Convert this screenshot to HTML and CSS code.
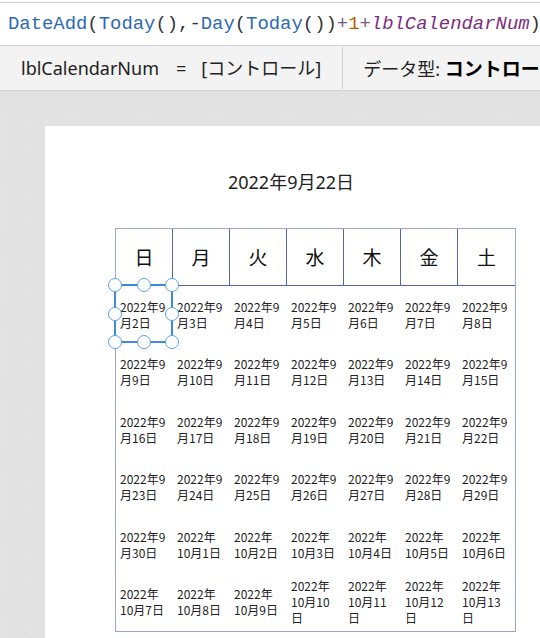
FILE: index.html
```html
<!DOCTYPE html>
<html lang="ja">
<head>
<meta charset="UTF-8">
<meta name="viewport" content="width=device-width, initial-scale=1.0">
<title>カレンダー</title>
<link rel="stylesheet" href="styles.css">
<script>
    var days;

    // 2022/9/2 から 42日分のラベルを並べる
    function getList(){
        var str = "";
        for(var i=0;i<42;i++){
            var d = new Date(2022, 8, 2 + i);
            str += "<div class='day'>" + d.getFullYear() + "年" + (d.getMonth()+1) + "月" + d.getDate() + "日</div>";
        }
        days.innerHTML = str;
    }

    window.addEventListener("load",function(){
        days = document.querySelector(".days");
        getList();
    });
</script>
</head>
<body>
    <div class="formula-bar">
        <span class="fn">DateAdd</span><span class="op">(</span><span class="fn">Today</span><span class="op">(),-</span><span class="fn">Day</span><span class="op">(</span><span class="fn">Today</span><span class="op">())</span><span class="plus">+</span><span class="num">1</span><span class="plus">+</span><span class="var">lblCalendarNum</span><span class="op">)</span>
    </div>
    <div class="info-bar">
        <div class="prop">lblCalendarNum<span class="eq">=</span>[コントロール]</div>
        <div class="type">データ型: <b>コントロー</b></div>
    </div>
    <div class="canvas">
        <div class="screen">
            <div class="title">2022年9月22日</div>
            <div class="gallery">
                <div class="week">
                    <div class="wd">日</div>
                    <div class="wd">月</div>
                    <div class="wd">火</div>
                    <div class="wd">水</div>
                    <div class="wd">木</div>
                    <div class="wd">金</div>
                    <div class="wd">土</div>
                </div>
                <div class="days"></div>
                <div class="selection">
                    <span class="handle tl"></span>
                    <span class="handle tc"></span>
                    <span class="handle tr"></span>
                    <span class="handle ml"></span>
                    <span class="handle mr"></span>
                    <span class="handle bl"></span>
                    <span class="handle bc"></span>
                    <span class="handle br"></span>
                </div>
            </div>
        </div>
    </div>
</body>
</html>
```
FILE: styles.css
```css
body{
    margin: 0;
    overflow: hidden;
    font-family: "Noto Sans", "Noto Sans CJK JP", sans-serif;
    color: #222;
    background: #fff;
}
.formula-bar{
    margin-top: 2px;
    height: 42px;
    border-top: 1px solid #d2d2d2;
    border-bottom: 1px solid #d2d2d2;
    padding-left: 8px;
    font-family: "Liberation Mono", monospace;
    font-size: 18.9px;
    line-height: 42px;
    white-space: nowrap;
    overflow: hidden;
}
.fn{ color: #2d6ab2; }
.op{ color: #333; }
.plus{ color: #75627f; }
.num{ color: #b35c00; }
.var{ color: #7e2d82; font-style: italic; }

.info-bar{
    height: 44px;
    background: #f3f3f3;
    border-bottom: 1px solid #d2d2d2;
    display: flex;
    align-items: center;
    font-size: 18px;
    white-space: nowrap;
    overflow: hidden;
}
.prop{
    padding: 0 21px 0 21px;
    height: 42px;
    line-height: 42px;
    border-right: 1px solid #cfcfcf;
}
.eq{
    margin: 0 15px 0 17px;
}
.type{
    padding-left: 20px;
}
.type b{
    color: #000;
    font-size: 19px;
}

.canvas{
    height: 547px;
    padding: 35px 0 0 45px;
    box-sizing: border-box;
    background-color: #e2e2e2;
    background-image: radial-gradient(#d8d8d8 0.7px, transparent 1px);
    background-size: 9px 9px;
    overflow: hidden;
}
.screen{
    background: #fff;
    height: 600px;
    padding-top: 42px;
    box-sizing: border-box;
}
.title{
    width: 492px;
    text-align: center;
    font-size: 18px;
    line-height: 28px;
}
.gallery{
    position: relative;
    width: 399px;
    margin: 32px 0 0 70px;
    border: 1px solid #9ea5d4;
}
.week{
    display: grid;
    grid-template-columns: repeat(7, 57px);
}
.wd{
    height: 57px;
    box-sizing: border-box;
    border-right: 1px solid #5a64a2;
    border-bottom: 1px solid #5a64a2;
    display: flex;
    align-items: center;
    justify-content: center;
    font-size: 19px;
    color: #111;
}
.wd:last-child{
    border-right: none;
}
.days{
    display: grid;
    grid-template-columns: repeat(7, 57px);
    grid-auto-rows: 57.5px;
}
.day{
    padding: 0 5px 0 4px;
    display: flex;
    align-items: center;
    font-family: "Noto Sans CJK JP", sans-serif;
    font-size: 12px;
    line-height: 16px;
    color: #222;
}
.selection{
    position: absolute;
    left: -2px;
    top: 55px;
    width: 59px;
    height: 59px;
    box-sizing: border-box;
    border: 2px solid #3f8bd6;
}
.handle{
    position: absolute;
    width: 12px;
    height: 12px;
    border: 1.5px solid #5da2e4;
    border-radius: 50%;
    background: #fff;
    transform: translate(-50%, -50%);
}
.tl{ left: -1px; top: -1px; }
.tc{ left: 50%; top: -1px; }
.tr{ left: calc(100% + 1px); top: -1px; }
.ml{ left: -1px; top: 50%; }
.mr{ left: calc(100% + 1px); top: 50%; }
.bl{ left: -1px; top: calc(100% + 1px); }
.bc{ left: 50%; top: calc(100% + 1px); }
.br{ left: calc(100% + 1px); top: calc(100% + 1px); }
```
